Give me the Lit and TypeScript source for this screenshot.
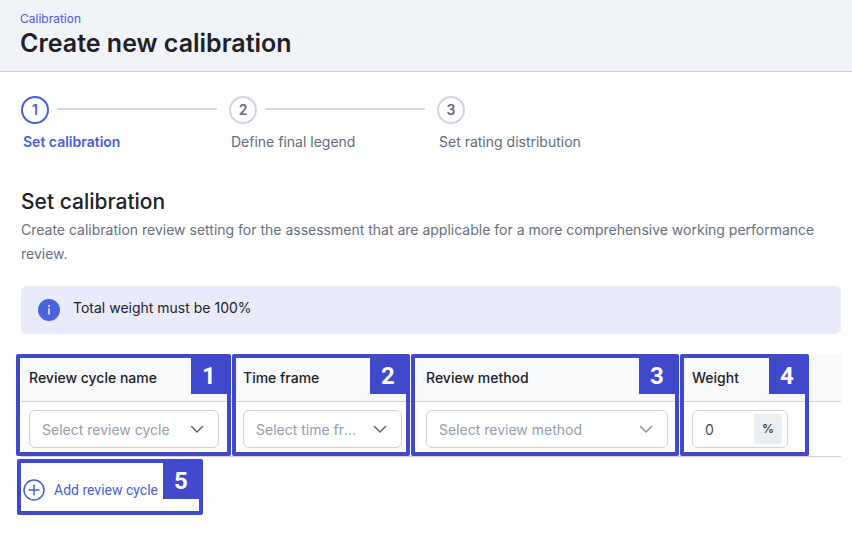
import { LitElement, html, css, svg } from "lit";
import { customElement, property, state } from "lit/decorators.js";
import { classMap } from "lit/directives/class-map.js";

const chevron = svg`<path d="M1.5 1.5 7 7l5.5-5.5" fill="none" stroke="currentColor" stroke-width="1.5" stroke-linecap="round" stroke-linejoin="round"/>`;

/** Outlined frame with a numbered corner, laid over the region it explains. */
@customElement("callout-frame")
export class CalloutFrame extends LitElement {
  @property() label = "";

  static styles = css`
    :host {
      display: flex;
      justify-content: flex-end;
      align-items: flex-start;
      box-sizing: border-box;
      border: 4px solid #4048cc;
      border-radius: 2px;
      pointer-events: none;
    }
    .number {
      width: 36px;
      height: 36px;
      background: #4048cc;
      color: #fff;
      font: bold 24px/36px Roboto, Arial, sans-serif;
      text-align: center;
    }
  `;

  render() {
    return html`<span class="number">${this.label}</span>`;
  }
}

@customElement("select-field")
export class SelectField extends LitElement {
  @property() label = "";
  @property() placeholder = "";
  @property({ type: Boolean }) muted = false;

  static styles = css`
    :host {
      display: block;
    }
    .field {
      display: grid;
      align-items: center;
    }
    .control {
      grid-area: 1 / 1;
      appearance: none;
      box-sizing: border-box;
      width: 100%;
      height: 38px;
      margin: 0;
      padding: 2px 44px 0 12px;
      border: 1px solid #cdd3dd;
      border-radius: 6px;
      background: #fff;
      color: #959dad;
      font: 400 14px/20px Inter, sans-serif;
      text-overflow: ellipsis;
    }
    .arrow {
      grid-area: 1 / 1;
      justify-self: end;
      width: 14px;
      height: 9px;
      margin-right: 15px;
      color: #5e6878;
      pointer-events: none;
    }
    .muted {
      color: #8b93a2;
    }
  `;

  render() {
    return html`<div class="field">
      <select class="control" aria-label=${this.label}>
        <option>${this.placeholder}</option>
      </select>
      <svg class=${classMap({ arrow: true, muted: this.muted })} viewBox="0 0 14 9" aria-hidden="true">${chevron}</svg>
    </div>`;
  }
}

@customElement("app-root")
export class AppRoot extends LitElement {
  @state() private current = 0;

  private steps = ["Set calibration", "Define final legend", "Set rating distribution"];

  static styles = css`
    :host {
      display: block;
      min-height: 100vh;
      background: #fff;
      color: #1e2126;
      font: 400 14px/24px Inter, sans-serif;
    }
    .top {
      padding: 11px 20px 12px;
      background: #f0f3f8;
      border-bottom: 1px solid #cdd3dc;
    }
    .crumb {
      display: block;
      width: max-content;
      color: #4b5edb;
      font-size: 12px;
      line-height: 16px;
      text-decoration: none;
    }
    .title {
      margin: 0;
      font-size: 25px;
      font-weight: 600;
      line-height: 32px;
    }
    .content {
      padding: 24px 11px 24px 21px;
    }
    .steps {
      display: flex;
      margin: 0;
      padding: 0;
      list-style: none;
    }
    .step {
      display: grid;
      grid-template-columns: 28px 160px;
      column-gap: 8px;
      row-gap: 6px;
      width: 208px;
      color: #626c7a;
    }
    .dot {
      box-sizing: border-box;
      width: 28px;
      height: 28px;
      border: 2px solid #cfd5df;
      border-radius: 50%;
      font-weight: 600;
      text-align: center;
    }
    .line {
      height: 2px;
      margin-top: 12px;
      background: #cfd5df;
      border-radius: 1px;
    }
    .step:last-child .line {
      visibility: hidden;
    }
    .name {
      grid-column: 1 / -1;
      padding-left: 2px;
      white-space: nowrap;
    }
    .active {
      color: #4b5edb;
    }
    .active .dot {
      border-color: #4b5edb;
    }
    .active .name {
      font-weight: 600;
    }
    .heading {
      margin: 32px 0 0;
      font-size: 21px;
      font-weight: 500;
      line-height: 32px;
    }
    .intro {
      margin: 0;
      color: #667080;
    }
    .notice {
      display: flex;
      align-items: center;
      gap: 13px;
      margin-top: 20px;
      padding: 10px 17px 14px;
      border-radius: 6px;
      background: #e9ebfa;
    }
    .info {
      width: 22px;
      height: 22px;
      margin: 3px 0 -1px;
    }
    .cycles {
      position: relative;
      margin-top: 20px;
    }
    .table {
      width: 100%;
      table-layout: fixed;
      border-collapse: separate;
      border-spacing: 0;
    }
    .col-name {
      width: 214px;
    }
    .col-time {
      width: 183px;
    }
    .col-weight {
      width: 125px;
    }
    .col-end {
      width: 32px;
    }
    th,
    td {
      box-sizing: border-box;
      border-bottom: 1px solid #cdd3dc;
      text-align: left;
    }
    th {
      height: 48px;
      padding: 0 8px;
      background: #f8f9fb;
      font-weight: 500;
    }
    td {
      height: 55px;
      padding: 8px 16px 8px 8px;
      vertical-align: top;
    }
    .weight {
      display: flex;
      align-items: center;
      box-sizing: border-box;
      width: 96px;
      height: 38px;
      padding: 0 5px 0 12px;
      border: 1px solid #cdd3dd;
      border-radius: 6px;
    }
    .weight-input {
      flex: 1;
      min-width: 0;
      padding: 2px 0 0;
      border: 0;
      background: none;
      color: #444c58;
      font: inherit;
    }
    .unit {
      width: 28px;
      border-radius: 0 4px 4px 0;
      background: #eceff2;
      color: #3c434e;
      font-size: 12px;
      font-weight: 600;
      line-height: 30px;
      text-align: center;
    }
    .callouts {
      position: absolute;
      inset: 0 32px 1px -5px;
      display: grid;
      grid-template-columns: 215px 178px 1fr 129px;
      gap: 1px;
      pointer-events: none;
    }
    .add-area {
      position: relative;
      box-sizing: border-box;
      width: 186px;
      height: 56px;
      margin: 2px 0 0 -4px;
      padding: 20px 6px 0;
    }
    .add-callout {
      position: absolute;
      inset: 0;
    }
    .add {
      display: flex;
      align-items: center;
      gap: 9px;
      padding: 0;
      border: 0;
      background: none;
      color: #4b5edb;
      font: 400 14px/22px Roboto, sans-serif;
      cursor: pointer;
    }
    .plus {
      width: 22px;
      height: 22px;
    }
  `;

  render() {
    return html`
      <header class="top">
        <a class="crumb" href="#calibration">Calibration</a>
        <h1 class="title">Create new calibration</h1>
      </header>
      <main class="content">
        <ol class="steps">
          ${this.steps.map(
            (name, i) => html`<li class=${classMap({ step: true, active: i === this.current })}>
              <span class="dot">${i + 1}</span>
              <span class="line"></span>
              <span class="name">${name}</span>
            </li>`
          )}
        </ol>
        <h2 class="heading">Set calibration</h2>
        <p class="intro">
          Create calibration review setting for the assessment that are applicable for a more
          comprehensive working performance review.
        </p>
        <div class="notice" role="note">
          <svg class="info" viewBox="0 0 22 22" aria-hidden="true">
            <circle cx="11" cy="11" r="11" fill="#4b62dd" />
            <path d="M11 9.2v6.2" stroke="#e9ebfa" stroke-width="1.6" />
            <circle cx="11" cy="6.9" r="1" fill="#e9ebfa" />
          </svg>
          <span>Total weight must be 100%</span>
        </div>
        <div class="cycles">
          <table class="table">
            <colgroup>
              <col class="col-name" />
              <col class="col-time" />
              <col />
              <col class="col-weight" />
              <col class="col-end" />
            </colgroup>
            <thead>
              <tr>
                <th scope="col">Review cycle name</th>
                <th scope="col">Time frame</th>
                <th scope="col">Review method</th>
                <th scope="col">Weight</th>
                <th></th>
              </tr>
            </thead>
            <tbody>
              <tr>
                <td><select-field label="Review cycle name" placeholder="Select review cycle"></select-field></td>
                <td><select-field label="Time frame" placeholder="Select time frame"></select-field></td>
                <td><select-field label="Review method" placeholder="Select review method" muted></select-field></td>
                <td>
                  <label class="weight">
                    <input class="weight-input" aria-label="Weight" inputmode="numeric" value="0" />
                    <span class="unit">%</span>
                  </label>
                </td>
                <td></td>
              </tr>
            </tbody>
          </table>
          <div class="callouts">
            ${["1", "2", "3", "4"].map((n) => html`<callout-frame label=${n}></callout-frame>`)}
          </div>
        </div>
        <div class="add-area">
          <button class="add" type="button">
            <svg class="plus" viewBox="0 0 22 22" fill="none" stroke="currentColor" stroke-width="1.5" aria-hidden="true">
              <circle cx="11" cy="11" r="10" />
              <path d="M11 5.5v11M5.5 11h11" />
            </svg>
            Add review cycle
          </button>
          <callout-frame class="add-callout" label="5"></callout-frame>
        </div>
      </main>
    `;
  }
}
